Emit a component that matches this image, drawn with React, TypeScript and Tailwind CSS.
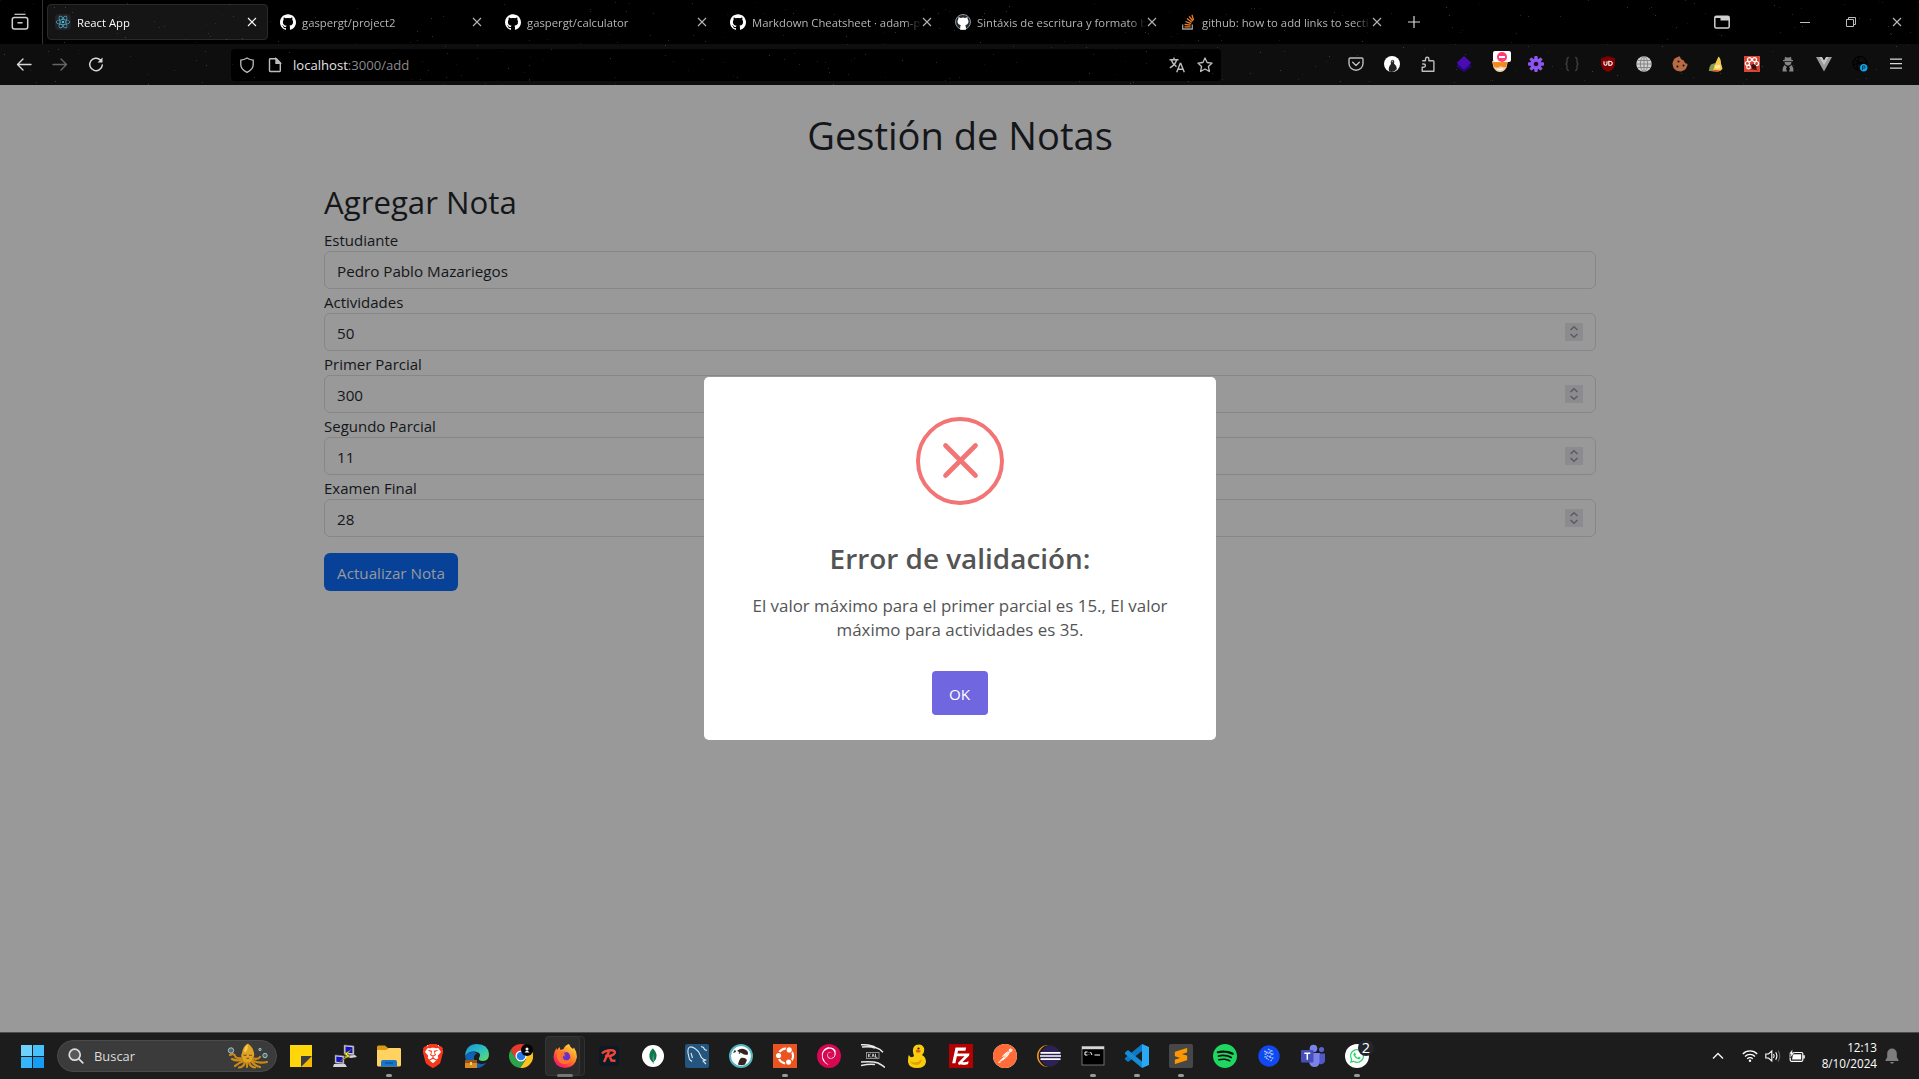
import type { ReactNode } from "react";
import {
  SiBrave,
  SiDebian,
  SiFilezilla,
  SiGithub,
  SiMongodb,
  SiPostman,
  SiReact,
  SiSpotify,
  SiSublimetext,
  SiUbuntu,
} from "react-icons/si";
import { FaCookieBite, FaWhatsapp } from "react-icons/fa6";

/* ---------- star field behind the browser chrome ---------- */

const STARS = Array.from({ length: 330 }, (_, i) => ({
  x: (i * 397 + ((i * i * 31) % 211)) % 1919,
  y: (i * 53 + ((i * i * 17) % 67)) % 85,
  o: 0.08 + ((i * 7) % 10) / 45,
}));

const Stars = () => (
  <svg className="pointer-events-none absolute inset-0 h-full w-full" aria-hidden="true">
    {STARS.map((s, i) => (
      <rect key={i} x={s.x} y={s.y} width={1} height={1} fill="#c9bcc0" opacity={s.o} />
    ))}
  </svg>
);

/* ---------- small glyphs ---------- */

const CloseX = ({ className = "" }: { className?: string }) => (
  <svg viewBox="0 0 10 10" className={"h-2.5 w-2.5 " + className} fill="none" stroke="currentColor" strokeWidth="1.1">
    <path d="M1 1l8 8M9 1L1 9" />
  </svg>
);

const Shield = () => (
  <svg viewBox="0 0 16 16" className="h-4 w-4" fill="none" stroke="#bdbdbd" strokeWidth="1.3">
    <path d="M8 1c2 1.300 4 2 6.200 2.200V8c0 3.200-3 5.700-6.200 7.300C4.800 13.700 1.800 11.200 1.800 8V3.200C4 3 6 2.300 8 1z" />
  </svg>
);

const PageIcon = () => (
  <svg viewBox="0 0 16 16" className="h-4 w-4" fill="none" stroke="#bdbdbd" strokeWidth="1.4">
    <path d="M3.500 1.700h5.800l4 4v8.100q0 .7-.7.7H3.200q-.7 0-.7-.7V2.400q0-.7 1-.7z" />
    <path d="M9 1.700v4.500h4.300z" fill="#bdbdbd" />
  </svg>
);

const Translate = () => (
  <svg viewBox="0 0 16 16" className="h-4 w-4" fill="none" stroke="#bdbdbd" strokeWidth="1.4">
    <path d="M.5 2.700h9M5 .6v2M2.300 3c1 3.200 3 5.300 5.200 6.600M7.600 3C6.600 6.400 4 9.300.8 10.800" />
    <path d="M7.700 15.200l3.500-8.700h.6l3.500 8.700M9 12.200h5" />
  </svg>
);

/* ---------- browser ---------- */

type Tab = { title: string; icon: ReactNode; active?: boolean };

const octo = <SiGithub className="h-4 w-4 text-white" />;

const TABS: Tab[] = [
  {
    title: "React App",
    active: true,
    icon: (
      <span className="flex h-4 w-4 items-center justify-center rounded-sm bg-[#20232a]">
        <SiReact className="h-3.5 w-3.5 text-[#53b6cf]" />
      </span>
    ),
  },
  { title: "gaspergt/project2", icon: octo },
  { title: "gaspergt/calculator", icon: octo },
  { title: "Markdown Cheatsheet · adam-p", icon: octo },
  {
    title: "Sintáxis de escritura y formato b",
    icon: (
      <span className="flex h-4 w-4 items-center justify-center rounded-full border border-[#8b949e] bg-[#24292f]">
        <svg viewBox="0 0 16 16" className="h-4 w-4 shrink-0">
          <path
            fill="#fff"
            d="M3.600 3l2 .9q2.400-.6 4.800 0l2-.9.3 2.300q1.200 1.400.7 3.300-.5 2.300-3.100 2.700.6.8.6 2.200v2.200H5.200v-2.200q0-1.400.6-2.200-2.700-.4-3.200-2.700-.5-1.900.7-3.300z"
          />
        </svg>
      </span>
    ),
  },
  {
    title: "github: how to add links to secti",
    icon: (
      <svg viewBox="0 0 16 16" className="h-4 w-4" fill="none" strokeWidth="1.300">
        <path stroke="#9a9c9f" d="M2.700 10.500v4.500h9.600v-4.500" />
        <path stroke="#f48024" d="M4.500 12.800h6M4.600 10.300l6 .9M5.500 7.500l5.600 2.100M7 4.600l4.900 3.600M9.200 2.300l3.600 4.700M12 .8l1.500 5.400" />
      </svg>
    ),
  },
];

function TabStrip() {
  return (
    <div className="relative flex h-11 items-center bg-black">
      <div className="flex h-11 w-[43px] items-center justify-center border-r border-[#333] pr-0.5">
        <svg viewBox="0 0 18 18" className="h-[18px] w-[18px]" fill="none" stroke="#d0d0d0" strokeWidth="1.500">
          <path d="M3.500 1.300h11" strokeWidth="1.200" />
          <rect x="1.300" y="4.500" width="15.400" height="11.500" rx="2" />
          <path d="M6.500 9.800h5" />
        </svg>
      </div>
      <div className="ml-1 flex gap-1">
        {TABS.map((t) => (
          <div
            key={t.title}
            className={
              t.active
                ? "relative flex h-9 w-[221px] items-center rounded border border-[#2a2a2a] bg-[#151515] pl-[7px] text-[#fbfbfe]"
                : "relative flex h-9 w-[221px] items-center pl-2 text-[#b5b5b7]"
            }
          >
            <span className="shrink-0">{t.icon}</span>
            <span className="ml-1.5 w-[169px] whitespace-nowrap pt-0.5 text-[11.300px] [mask-image:linear-gradient(to_right,black_90%,transparent)]">
              {t.title}
            </span>
            <CloseX className={t.active ? "absolute right-2.5" : "absolute right-[11px]"} />
          </div>
        ))}
      </div>
      <svg viewBox="0 0 12 12" className="ml-[15px] h-3 w-3" stroke="#d8d8d8" strokeWidth="1.200">
        <path d="M6 0v12M0 6h12" />
      </svg>
      <div className="-mr-px ml-auto flex items-center">
        <svg viewBox="0 0 16 14" className="mr-[52px] h-3.5 w-4" fill="none" stroke="#d0d0d0" strokeWidth="1.500">
          <rect x=".8" y="1.300" width="14.400" height="11.700" rx="1.500" />
          <path d="M1 1h14v2H1zM6.500 1.500H15v4H6.500z" fill="#d0d0d0" stroke="none" />
        </svg>
        <div className="flex w-[46px] justify-center">
          <i className="block h-px w-2.5 bg-[#bdbdbd]" />
        </div>
        <div className="flex w-[46px] justify-center">
          <svg viewBox="0 0 10 10" className="h-2.5 w-2.5" fill="none" stroke="#bdbdbd">
            <path d="M.5 2.500h7v7h-7zM2.500 2.500v-2h7v7h-2" />
          </svg>
        </div>
        <div className="flex w-[46px] justify-center text-[#bdbdbd]">
          <CloseX />
        </div>
      </div>
    </div>
  );
}

const EXTENSIONS: ReactNode[] = [
  <svg viewBox="0 0 16 16" className="h-4 w-4" fill="none" stroke="#bdbdbd" strokeWidth="1.400" strokeLinecap="round" strokeLinejoin="round">
    <path d="M2.200 2h11.600q1.200 0 1.200 1.200V7.500a7 6.700 0 0 1-14 0V3.200Q1 2 2.200 2z" />
    <path d="M4.700 6.300L8 9.500l3.300-3.200" />
  </svg>,
  <svg viewBox="0 0 16 16" className="h-4 w-4">
    <circle cx="8" cy="8" r="8" fill="#fff" />
    <path d="M5.200 15.500q-1.500-4 1.800-7.500-.8-2 .2-3.600 1.400-1.500 2.700 0 .8 1.600 0 3.200 2.800 2 3 5.400Q11 15.500 8 16z" fill="#222" />
    <path d="M7.600 4.300h1.500v2H7.600z" fill="#999" />
  </svg>,
  <svg viewBox="0 0 16 16" className="h-4 w-4" fill="none" stroke="#bdbdbd" strokeWidth="1.400" strokeLinejoin="round">
    <path d="M2.200 4.800h3.300V2.900a1.700 1.700 0 0 1 3.400 0v1.900h4q1 0 1 1v9.400H2.200v-4h1.600a1.600 1.600 0 0 0 0-3.200H2.200" />
  </svg>,
  <svg viewBox="0 0 16 16" className="h-4 w-4">
    <path d="M8 3.500l8 7L8 16l-8-5.500z" fill="#25087c" />
    <path d="M8 0l7.300 6.700L8 13.400.7 6.700z" fill="#4b0bb0" />
  </svg>,
  <span className="relative flex">
    <svg viewBox="0 0 16 16" className="h-4 w-4">
      <path d="M0 5h16l-1.500 6.500Q12 16 8 16t-6.500-4.500z" fill="#f0d0a8" />
      <path d="M.5 6.500q4-2.500 8 0 3-1.500 7-.5l-1.500 5q-3 1-5-1-4 3-7 .5z" fill="#f38a1d" />
      <path d="M5 12.500q3 2 6 0" stroke="#fff" strokeWidth="1.200" fill="none" />
    </svg>
    <span className="absolute -right-[3px] -top-[5px] flex h-[11px] w-[18px] items-center justify-center rounded-[2px] bg-white">
      <span className="flex h-2.5 w-2.5 items-center justify-center rounded-full bg-[#ff3b71]">
        <i className="block h-[2px] w-1.5 bg-white" />
      </span>
    </span>
  </span>,
  <svg viewBox="0 0 16 16" className="h-4 w-4">
    <g fill="#8d56ec">
      {[0, 45, 90, 135].map((a) => (
        <rect key={a} x="6.300" y="0" width="3.400" height="16" rx=".8" transform={`rotate(${a} 8 8)`} />
      ))}
      <circle cx="8" cy="8" r="5.700" />
    </g>
    <circle cx="8" cy="8" r="2.300" fill="#160b29" />
  </svg>,
  <svg viewBox="0 0 16 16" className="h-4 w-4" fill="none" stroke="#3a3a3a" strokeWidth="1.500">
    <path d="M5 1.500Q3 1.500 3 3.500v2.300Q3 8 1.300 8 3 8 3 10.200v2.300q0 2 2 2M11 1.500q2 0 2 2v2.300Q13 8 14.700 8 13 8 13 10.200v2.300q0 2-2 2" />
  </svg>,
  <svg viewBox="0 0 16 16" className="h-4 w-4">
    <path d="M8 0q3.500 2 7 2v6q0 5-7 8-7-3-7-8V2q3.500 0 7-2z" fill="#800000" />
    <path d="M4 5.300v2.500q0 1.500 1.500 1.500T7 7.800V5.300M8.800 5.300v4q3.400.3 3.400-2t-3.400-2z" stroke="#fff" strokeWidth="1.100" fill="none" />
  </svg>,
  <svg viewBox="0 0 16 16" className="h-4 w-4">
    <circle cx="8" cy="8" r="7.700" fill="#d0d0d0" />
    <g stroke="#777" strokeWidth=".8" fill="none">
      <ellipse cx="8" cy="8" rx="3.600" ry="7.500" />
      <path d="M8 .5v15M.5 8h15M1.700 4.500h12.600M1.700 11.500h12.600" />
    </g>
  </svg>,
  <FaCookieBite className="h-4 w-4 text-[#b56b43]" />,
  <svg viewBox="0 0 16 16" className="h-4 w-4">
    <path d="M10.500.5q2.500 2 2.500 7l1.500 5Q13 16 8 15.500l-6-.5q1-5 5-7z" fill="#f3c84b" />
    <path d="M3 8.500L7 7 5 15H.8q0-4 2.200-6.500z" fill="#8a9a50" />
    <path d="M7 10q3-2 5.500-1L12 12q-3 1.500-5 0z" fill="#ffe9a0" />
    <path d="M4 15l3-1 5 .5-2 1.500z" fill="#d84b32" />
  </svg>,
  <svg viewBox="0 0 16 16" className="h-4 w-4">
    <path d="M0 0h16v16H0z" fill="#d84637" />
    <g fill="none" stroke="#fff" strokeWidth="1.200">
      <circle cx="5.500" cy="3.700" r="2" />
      <circle cx="10.500" cy="3.700" r="2" />
      <circle cx="3.400" cy="7.500" r="2" />
      <circle cx="12.600" cy="7.500" r="2" />
      <circle cx="4.500" cy="11" r="1.800" />
    </g>
    <ellipse cx="10" cy="11" rx="2.200" ry="3" fill="#3a0d0a" transform="rotate(-35 10 11)" />
    <path d="M6.500 8.500l7 6M12.500 8l-5 6" stroke="#3a0d0a" strokeWidth=".8" />
  </svg>,
  <svg viewBox="0 0 16 16" className="h-4 w-4" fill="#858585">
    <path d="M4.500 4L5 .8l1.700.7h2.600L11 .8l.5 3.200H13v1.200H3V4z" />
    <path d="M4.500 6h7l-.7 2.500L8 9.700 5.200 8.500z" />
    <path d="M4.300 9L7 11l-1 1.500L7 15.500H2.500q0-4.500 1.800-6.500zM11.700 9L9 11l1 1.500-1 3h4.500q0-4.500-1.800-6.500z" />
  </svg>,
  <svg viewBox="0 0 16 16" className="h-4 w-4">
    <path d="M0 1h5l3 5.500L11 1h5L8 15.500z" fill="#9b9b9b" />
    <path d="M3.500 1H6l2 3.500L10 1h2.500L8 9z" fill="#c9c9c9" />
  </svg>,
  <svg viewBox="0 0 16 16" className="h-4 w-4">
    <g fill="none" stroke="#000" strokeWidth="1.200">
      <circle cx="8" cy="7.500" r="7" />
      <path d="M2 4q7 1 11 8M8 .5Q4 6 5 14M1 9q7-3 13-2" />
    </g>
    <circle cx="11.700" cy="11.700" r="3.700" fill="#12a5e8" />
    <path d="M10.500 14v-4h1.600a1 1 0 0 1 0 2.200h-1" stroke="#04324a" strokeWidth=".9" fill="none" />
  </svg>,
  <svg viewBox="0 0 16 16" className="h-4 w-4" stroke="#d8d8d8" strokeWidth="1.300">
    <path d="M2 3.200h12M2 7.700h12M2 12.200h12" />
  </svg>,
];

function Toolbar() {
  return (
    <div className="relative flex h-[41px] items-center bg-[#0e0e0e] pr-[5px]">
      <div className="flex pl-1.5 [&>span]:flex [&>span]:w-9 [&>span]:justify-center">
        <span>
          <svg viewBox="0 0 16 16" className="h-4 w-4" fill="none" stroke="#d8d8d8" strokeWidth="1.400" strokeLinecap="round" strokeLinejoin="round">
            <path d="M15 7.500H1.500M7 2L1.500 7.500 7 13" />
          </svg>
        </span>
        <span>
          <svg viewBox="0 0 16 16" className="h-4 w-4" fill="none" stroke="#666" strokeWidth="1.400" strokeLinecap="round" strokeLinejoin="round">
            <path d="M1 7.500h13.500M9 2l5.500 5.500L9 13" />
          </svg>
        </span>
        <span>
          <svg viewBox="0 0 16 16" className="h-4 w-4" fill="none" stroke="#d8d8d8" strokeWidth="1.500">
            <path d="M14.300 8A6.300 6.300 0 1 1 12.500 3" strokeLinecap="round" />
            <path d="M14.500.5v5H9.500z" fill="#d8d8d8" stroke="none" />
          </svg>
        </span>
      </div>
      <div className="ml-[117px] flex h-8 w-[990px] items-center rounded bg-black px-2">
        <Shield />
        <span className="ml-3 flex">
          <PageIcon />
        </span>
        <span className="ml-2.5 text-[13.100px] leading-5 text-[#8a8a8c]">
          <span className="text-[#e4e4e6]">localhost</span>:3000/add
        </span>
        <span className="ml-auto mr-3 flex">
          <Translate />
        </span>
        <svg viewBox="0 0 16 16" className="h-4 w-4" fill="none" stroke="#bdbdbd" strokeWidth="1.300" strokeLinejoin="round">
          <path d="M8 .9l2.100 4.600 5 .6-3.700 3.400 1 5L8 12l-4.400 2.500 1-5L.9 6.100l5-.6z" />
        </svg>
      </div>
      <div className="ml-auto flex pb-px">
        {EXTENSIONS.map((e, i) => (
          <span key={i} className="flex w-9 justify-center">
            {e}
          </span>
        ))}
      </div>
    </div>
  );
}

/* ---------- page ---------- */

const FIELDS = [
  { label: "Estudiante", value: "Pedro Pablo Mazariegos", numeric: false },
  { label: "Actividades", value: "50", numeric: true },
  { label: "Primer Parcial", value: "300", numeric: true },
  { label: "Segundo Parcial", value: "11", numeric: true },
  { label: "Examen Final", value: "28", numeric: true },
];

function GradeForm() {
  return (
    <div className="ml-[324px] w-[1272px] pt-[26px] text-[15.200px] text-[#141619]">
      <h1 className="text-center text-[38.100px] leading-[48px]">Gestión de Notas</h1>
      <h2 className="mb-1.5 mt-6 text-[31.200px] leading-[38px]">Agregar Nota</h2>
      {FIELDS.map((f) => (
        <div key={f.label}>
          <div className="h-6 pt-px text-[15px] leading-6">{f.label}</div>
          <div className="flex h-[38px] items-center justify-between rounded-md border border-[#858789] px-3">
            <span className="pt-0.5 leading-6">{f.value}</span>
            {f.numeric && (
              <span className="flex h-[18px] w-[18px] items-center justify-center bg-[#8c8c8e]">
                <svg viewBox="0 0 10 14" className="h-3.5 w-2.5" fill="none" stroke="#5b5b62" strokeWidth="1.500">
                  <path d="M1.500 5L5 1.800 8.500 5M1.500 9L5 12.200 8.500 9" />
                </svg>
              </span>
            )}
          </div>
        </div>
      ))}
      <button className="mt-4 block h-[38px] w-[134px] rounded-md bg-[#084298] pt-0.5 text-[15.200px] text-[#999]">
        Actualizar Nota
      </button>
    </div>
  );
}

function ErrorDialog() {
  return (
    <div className="absolute inset-0 flex items-center justify-center">
      <div className="flex h-[363px] w-[512px] flex-col items-center rounded-[5px] bg-white pt-10 text-[#545454]">
        <svg viewBox="0 0 88 88" className="h-[88px] w-[88px]" fill="none" stroke="#f27474">
          <circle cx="44" cy="44" r="42" strokeWidth="4" />
          <path d="M29.500 28.500l30 30M59.500 28.500l-30 30" strokeWidth="4.700" strokeLinecap="round" />
        </svg>
        <h2 className="mt-[35px] pl-px text-[27.900px] font-semibold leading-9">Error de validación:</h2>
        <p className="mt-[18px] w-[440px] pl-px text-center text-[16.900px] leading-6">
          El valor máximo para el primer parcial es 15., El valor máximo para actividades es 35.
        </p>
        <button className="mt-[29px] h-11 w-14 rounded bg-[#7066e0] pt-0.5 text-[15.200px] text-white">OK</button>
      </div>
    </div>
  );
}

/* ---------- taskbar ---------- */

type TaskbarApp = { icon: ReactNode; running?: boolean; focused?: boolean };

const APPS: TaskbarApp[] = [
  {
    icon: (
      <svg viewBox="0 0 24 24" className="h-6 w-6">
        <path d="M1 1h22v22H1z" fill="#ffd60a" />
        <path d="M12 23V12h11v11z" fill="#f6b900" />
        <path d="M12 23V12h11z" fill="#3a3d42" />
      </svg>
    ),
  },
  {
    icon: (
      <svg viewBox="0 0 24 24" className="h-6 w-6">
        <path d="M11 1l10 1v9l-10-1zM2 11l9 1v8l-9-1z" fill="#d5d5d5" stroke="#777" strokeWidth=".6" />
        <path d="M12.500 2.500l7 .7v6l-7-.7zM3.300 12.500l6.400.7v5.300l-6.400-.7z" fill="#1111c8" />
        <path d="M10 12l12-1 2 2-6 1zM1 20h11l2 3H0z" fill="#d5d5d5" />
        <path d="M19 5l-8 5 3 2-8 6 11-6-3-2z" fill="#ffee22" stroke="#403b00" strokeWidth=".4" />
      </svg>
    ),
  },
  {
    running: true,
    icon: (
      <svg viewBox="0 0 24 24" className="h-6 w-6">
        <path d="M0 3q0-1.500 1.500-1.500H8L11 4h11v6H0z" fill="#d99b12" />
        <path d="M0 6h9l3-2h10.500Q24 4 24 5v16q0 1.500-1.500 1.500h-21Q0 22.500 0 21V6z" fill="#ffd262" />
        <path d="M4 22.500V18q0-2 2-2h12q2 0 2 2v4.500z" fill="#1976c9" />
        <path d="M8 19h8" stroke="#0b4f94" strokeWidth="1.200" />
      </svg>
    ),
  },
  {
    icon: (
      <span className="relative flex h-6 w-6 items-center justify-center">
        <svg viewBox="0 0 24 24" className="absolute inset-0 h-6 w-6">
          <path d="M6.500 1h11L20 4l1.500 2.500-3 12L12 23l-6.500-4.500-3-12L4 4z" fill="#fff" />
        </svg>
        <SiBrave className="relative h-6 w-6 text-[#f8381c]" />
      </span>
    ),
  },
  {
    icon: (
      <svg viewBox="0 0 24 24" className="h-6 w-6">
        <defs>
          <linearGradient id="edge" x1="0" y1="0" x2="1" y2="1">
            <stop offset="0" stopColor="#1593df" />
            <stop offset=".55" stopColor="#2fc2bd" />
            <stop offset="1" stopColor="#66df55" />
          </linearGradient>
        </defs>
        <path d="M0 12Q1 0 12 0q11 0 12 10 0 7-6 7-5 0-4-3 2-3 0-5Q6 5 0 12z" fill="url(#edge)" />
        <path d="M0 12q5-6 12-3-5 3-2 8 4 5 11 2-4 5-9 5Q1 23 0 12z" fill="#1161b7" />
        <path d="M0 16h12v8H0z" fill="#d98a25" />
        <path d="M0 16h12v3H0z" fill="#9a5514" />
        <path d="M5 18h2v3H5z" fill="#ffd35c" />
      </svg>
    ),
  },
  {
    icon: (
      <svg viewBox="0 0 24 24" className="h-6 w-6">
        <path d="M1.600 6L12 6.500v6L6.500 15z" fill="#e33b2e" />
        <path d="M12 12L1.600 6A12 12 0 0 1 22.400 6z" fill="#e33b2e" />
        <path d="M12 6.500h10.700A12 12 0 0 1 11 24l6-9z" fill="#fcc31e" />
        <path d="M1.600 6L7 15q4 4 9.500 1L11 24A12 12 0 0 1 1.600 6z" fill="#2ba24c" />
        <circle cx="12" cy="12" r="5.500" fill="#fff" />
        <circle cx="12" cy="12" r="4.300" fill="#287be8" />
        <circle cx="18" cy="6" r="6" fill="#050505" />
        <path d="M15.500 8.500q2.500-3.500 5 0z" fill="#fff" />
        <circle cx="18" cy="5" r="1.500" fill="#fff" />
      </svg>
    ),
  },
  {
    running: true,
    focused: true,
    icon: (
      <svg viewBox="0 0 24 24" className="h-6 w-6">
        <defs>
          <linearGradient id="fox" x1=".9" y1="0" x2=".2" y2="1">
            <stop offset="0" stopColor="#ffe341" />
            <stop offset=".45" stopColor="#ff8b27" />
            <stop offset=".8" stopColor="#ff3150" />
            <stop offset="1" stopColor="#e5158c" />
          </linearGradient>
        </defs>
        <path d="M16 0q1 3 4 5l1-1.500Q24 8 24 13 22 24 12 24 1 23 .5 13 .5 8 3.500 4L4 6l2.500-3 1 3 3-1Q12 1 16 0z" fill="url(#fox)" />
        <circle cx="12" cy="13" r="5.300" fill="#7a36d8" />
        <path d="M4 8q5-2 8 0l3 1q-2 3-5 3-1 3 3 4 4 0 5-4 1 8-6 8-6 0-8-6z" fill="#ff7b22" opacity=".9" />
        <path d="M11 9q4-2 5 1 2 4-1 6-4 1-5-2l3-1z" fill="#6b2fc8" />
      </svg>
    ),
  },
  {
    icon: (
      <span className="flex h-5 w-5 items-center justify-center rounded bg-[#0b1a24]">
        <svg viewBox="0 0 16 16" className="h-4 w-4" fill="none" stroke="#f2463a" strokeWidth="2.400">
          <path d="M1 5.500Q5 1.500 12.500 2.500q3 1.500 0 4Q10 8.500 4 8M8 3.500L3 14M8.500 8l2 4.500 4 .3" />
        </svg>
      </span>
    ),
  },
  {
    icon: (
      <span className="flex h-[22px] w-[22px] items-center justify-center rounded-full bg-white">
        <SiMongodb className="h-4 w-4 text-[#10774f]" />
      </span>
    ),
  },
  {
    icon: (
      <svg viewBox="0 0 24 24" className="h-6 w-6">
        <rect width="24" height="24" rx="2" fill="#24557e" />
        <path
          d="M7 17.500l-2.500-2L3 9q-.5-5.500 2-6 2-.5 5 1.500 4 2.500 5.500 7 1 3.500 5 4.500l-2.500 1 3 3M6 9l1.500 5M16 2.500l2.500 1 1 2 2.500 1"
          fill="none"
          stroke="#dce8f1"
          strokeWidth="1.100"
        />
      </svg>
    ),
  },
  {
    icon: (
      <svg viewBox="0 0 24 24" className="h-6 w-6">
        <circle cx="12" cy="12" r="11" fill="#fff" stroke="#52b5bd" strokeWidth="2" />
        <path d="M8 7q4-4 9-1 3 2 1.500 5L15 10.500q-3-2-7-3.500zM12 14q4-1 6 2l-2 4.500q-4 1.500-7 0 1-5 3-6.500zM4 9l2-3.500L7 8z" fill="#33261f" />
        <circle cx="10.500" cy="9" r=".8" fill="#111" />
      </svg>
    ),
  },
  {
    running: true,
    icon: (
      <span className="flex h-6 w-6 items-center justify-center bg-[#e95420]">
        <SiUbuntu className="h-[18px] w-[18px] text-white" />
      </span>
    ),
  },
  {
    icon: (
      <span className="flex h-6 w-6 items-center justify-center rounded-full bg-[#d70751]">
        <SiDebian className="h-[18px] w-[18px] text-white" />
      </span>
    ),
  },
  {
    icon: (
      <svg viewBox="0 0 24 24" className="h-6 w-6" fill="none" stroke="#e8e8e8">
        <path d="M0 .8q10-.5 15 3 4 1 7 4.500M1 3q8-1 13 1M0 18q12-1 17 1 4 2 7 4.500M0 21.500q9-2 14-1" strokeWidth="1.500" />
        <rect x="5.500" y="8.500" width="12.500" height="6" strokeWidth=".8" stroke="#aaa" />
        <path d="M7.500 9.800v3.500M9.700 9.800L7.800 11.500l1.900 1.800M11 13.300l1.100-3.500 1.200 3.500M14.500 9.800v3.500h1.800" strokeWidth=".8" />
      </svg>
    ),
  },
  {
    icon: (
      <svg viewBox="0 0 24 24" className="h-6 w-6">
        <path d="M9 12q-3-8 2-11 6-2 8 3 1 4-2 7 4 2 4 7-1 6-9 6T3 18q0-6 1-7 2 4 5 1z" fill="#f9cd0b" />
        <path d="M5 17q6 4 12-2-1 6-6 6-5-.5-6-4z" fill="#dfa100" />
        <circle cx="13.500" cy="4.500" r="1.100" fill="#222" />
        <path d="M11 6q3-1.500 5 1Q14 10 11 8z" fill="#e8591c" />
      </svg>
    ),
  },
  {
    icon: (
      <span className="flex h-6 w-6 bg-[#b30000] p-px">
        <span className="flex bg-white">
          <SiFilezilla className="h-[22px] w-[22px] scale-110 text-[#b30000]" />
        </span>
      </span>
    ),
  },
  {
    icon: (
      <span className="flex h-6 w-6 items-center justify-center rounded-full bg-white">
        <SiPostman className="h-6 w-6 text-[#ff6c37]" />
      </span>
    ),
  },
  {
    icon: (
      <svg viewBox="0 0 24 24" className="h-6 w-6">
        <circle cx="11" cy="12" r="11" fill="#f7941e" />
        <circle cx="12.600" cy="12" r="11" fill="#1c1c1c" />
        <circle cx="13.500" cy="12" r="10.300" fill="#2c2255" />
        <path d="M3.500 8.800h20M3 12h21M3.500 15.200h20" stroke="#fff" strokeWidth="1.700" />
      </svg>
    ),
  },
  {
    running: true,
    icon: (
      <svg viewBox="0 0 24 24" className="h-6 w-6">
        <rect x="1" y="2.500" width="22" height="18.500" fill="#000" stroke="#8a8a8a" strokeWidth=".8" />
        <path d="M1 2.500h22v2.700H1z" fill="#d5d5d5" />
        <path d="M6.500 8H4v3h2.500M8 8v.5M8 10.500v.5M9.500 8l1.500 3M13.500 11H19" stroke="#fff" strokeWidth="1" fill="none" />
      </svg>
    ),
  },
  {
    running: true,
    icon: (
      <svg viewBox="0 0 24 24" className="h-6 w-6">
        <path d="M17 0v7L3 18l-3-2.500V14z" fill="#0d78c4" />
        <path d="M0 8.500L3 6l14 11.500V24L0 10z" fill="#168bd5" />
        <path d="M17 0l7 3v18l-7 3z" fill="#2ba8f2" />
      </svg>
    ),
  },
  {
    running: true,
    icon: (
      <span className="flex h-6 w-6 items-center justify-center rounded-[2px] bg-[#474747]">
        <SiSublimetext className="h-4 w-4 text-[#ff9800]" />
      </span>
    ),
  },
  {
    icon: (
      <span className="flex h-6 w-6 items-center justify-center rounded-full bg-[#101010]">
        <SiSpotify className="h-6 w-6 text-[#1ed760]" />
      </span>
    ),
  },
  {
    icon: (
      <svg viewBox="0 0 22 22" className="h-[22px] w-[22px]">
        <circle cx="11" cy="11" r="10.700" fill="#1148f0" />
        <g fill="none" stroke="#a9ccff" strokeWidth="1.100">
          <path d="M10 4l4 2-4 2 5 1-4 3 4 1-3 4M6 6l3 1-2 2 3 2-3 1 4 3" strokeDasharray="2 .8" />
        </g>
      </svg>
    ),
  },
  {
    icon: (
      <svg viewBox="0 0 24 24" className="h-6 w-6">
        <circle cx="12.500" cy="4.500" r="3.800" fill="#7b83eb" />
        <circle cx="20.500" cy="5.500" r="2.600" fill="#5b62c9" />
        <path d="M8 9h11v9q-1 5-5.500 5T8 18z" fill="#7b83eb" />
        <path d="M18.500 9.500H24V17q-1.500 4-5.500 3z" fill="#5059c9" />
        <rect x="0" y="6" width="12.500" height="12.500" rx="1" fill="#464eb8" />
        <path d="M3.300 9.300h6M6.300 9.300v6.500" stroke="#fff" strokeWidth="1.500" />
      </svg>
    ),
  },
  {
    running: true,
    icon: (
      <span className="relative flex h-6 w-6 items-center justify-center rounded-full bg-white">
        <FaWhatsapp className="h-4 w-4 text-[#25d366]" />
        <span className="absolute -right-[5px] -top-1 flex h-4 w-4 items-center justify-center rounded-full bg-[#22252b] text-[14.500px] leading-none text-white">
          2
        </span>
      </span>
    ),
  },
];

function SearchBox() {
  return (
    <div className="flex h-8 w-[220px] items-center rounded-full border border-[#4a4a4a] bg-[#3b3b3b] pl-2.5 pr-[7px]">
      <svg viewBox="0 0 16 16" className="h-4 w-4" fill="none" stroke="#dcdcdc" strokeWidth="1.700" strokeLinecap="round">
        <circle cx="6.700" cy="6.700" r="5.500" fill="#5a5a5a" />
        <path d="M10.800 10.800l4 4" />
      </svg>
      <span className="ml-2.5 pt-px text-[12.900px] text-[#dcdcdc]">Buscar</span>
      <svg viewBox="0 0 42 26" className="ml-auto h-[26px] w-[42px]">
        <g fill="none" stroke="#c98a18" strokeWidth="2.200" strokeLinecap="round">
          <path d="M16 15Q9 16 8 13T3 12M16 17Q8 18 5 16M17 18Q11 20 8 23M18 19Q17 24 12 24.500M25 15q6 2 8-1M25 17q6 4 15 2M24 18q4 5 9 6M22 19q1 5 6 5.500M20 19v5" />
        </g>
        <path d="M15 10Q16 3 21 .5 26 4 27 10q1 4-2 5 1 4-4.500 4.500Q15 19 16 15q-3-1-1-5z" fill="#dfa325" />
        <path d="M18 4q2-2 3-3 0 5-2 8-2 0-2-1z" fill="#f6cb55" />
        <path d="M16.500 12q1.500 1 3 0M22 12q1.500 1 3 0M19.500 15q1.500 1 2.500 0" stroke="#6c4208" fill="none" />
        <g fill="#54656a" stroke="#9fc3c8">
          <circle cx="4" cy="7.500" r="2.700" />
          <circle cx="33" cy="6.500" r="1.200" />
          <circle cx="38" cy="12.500" r="2.200" />
        </g>
      </svg>
    </div>
  );
}

function Taskbar() {
  return (
    <div className="flex h-[47px] items-center border-t border-[#4c4c4c] bg-[#1c1c1c] pl-[21px]">
      <div className="mr-[13px] grid h-[23px] w-[23px] grid-cols-2 gap-px">
        <i className="bg-[#6fd0fb]" />
        <i className="bg-[#47c1fa]" />
        <i className="bg-[#36b6f8]" />
        <i className="bg-[#149df2]" />
      </div>
      <SearchBox />
      <div className="ml-0.5 flex">
        {APPS.map((a, i) => (
          <div key={i} className="relative flex h-[46px] w-11 items-center justify-center">
            {a.focused && (
              <>
                <span className="absolute left-0.5 top-[3px] h-10 w-10 rounded border border-[#303030] bg-[#222]" />
                <span className="absolute left-0.5 top-[3px] h-10 w-[35px] rounded border border-[#363636] bg-[#2b2b2b]" />
              </>
            )}
            <span className="relative">{a.icon}</span>
            {a.running && (
              <i
                className={
                  a.focused
                    ? "absolute bottom-[2px] left-3.5 h-[3px] w-4 rounded-full bg-[#777]"
                    : "absolute bottom-[2px] left-[19px] h-[3px] w-1.5 rounded-full bg-[#9a9a9a]"
                }
              />
            )}
          </div>
        ))}
      </div>
      <div className="ml-auto flex items-center pr-5">
        <svg viewBox="0 0 12 8" className="mr-[18px] h-2 w-3" fill="none" stroke="#eee" strokeWidth="1.500">
          <path d="M1 6.500l5-5 5 5" />
        </svg>
        <svg viewBox="0 0 16 14" className="mr-[7px] h-3.5 w-4" fill="none" stroke="#fff" strokeWidth="1.300">
          <path d="M.8 5a10 10 0 0 1 14.400 0M3 7.500a7 7 0 0 1 10 0M5.200 9.900a4 4 0 0 1 5.600 0" />
          <circle cx="8" cy="11.800" r="1.200" fill="#fff" stroke="none" />
        </svg>
        <svg viewBox="0 0 17 14" className="mr-[7px] h-3.5 w-[17px]" fill="none" stroke="#fff" strokeWidth="1.100">
          <path d="M.8 5v4h2.700l3.300 3V2L3.500 5z" />
          <path d="M8.500 5q1.300 2 0 4M10.700 3.300q2.400 3.700 0 7.400" />
          <path d="M13 1.500q3.600 5.500 0 11" stroke="#666" />
        </svg>
        <svg viewBox="0 0 16 14" className="mr-[17px] h-3.5 w-4">
          <rect x="1.200" y="3.500" width="12.600" height="8.800" rx="1.200" fill="none" stroke="#fff" strokeWidth="1.200" />
          <path d="M4 5.300h8.200v5.200H3z" fill="#fff" />
          <path d="M14.200 6.300h1.600v3.300h-1.600z" fill="#fff" />
          <path d="M3.500 0L0 5h2L1 9l4.500-5h-2z" fill="#fff" stroke="#1c1c1c" strokeWidth=".5" />
        </svg>
        <div className="mr-2 pb-0.5 text-right text-[11.700px] leading-4 text-white">
          <div>12:13</div>
          <div>8/10/2024</div>
        </div>
        <svg viewBox="0 0 14 16" className="h-4 w-3.5" fill="#7d7d7d">
          <path d="M7 .5a4.800 4.800 0 0 1 4.800 4.800v4L13.500 12v1H.5v-1l1.700-2.700v-4A4.800 4.800 0 0 1 7 .5zM5 14h4q-.5 1.700-2 1.700T5 14z" />
        </svg>
      </div>
    </div>
  );
}

export default function App() {
  return (
    <div className="flex h-[1079px] w-[1919px] flex-col overflow-hidden font-['Open_Sans','Noto_Sans',sans-serif]">
      <header className="relative">
        <TabStrip />
        <Toolbar />
        <Stars />
      </header>
      <main className="relative flex-1 bg-[#999]">
        <GradeForm />
        <ErrorDialog />
      </main>
      <Taskbar />
    </div>
  );
}
